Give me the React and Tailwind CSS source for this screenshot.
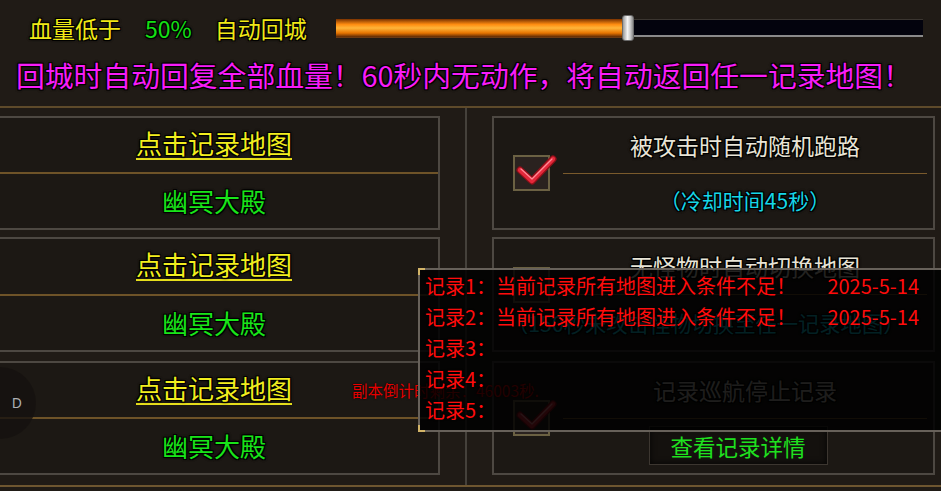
import React from 'react';

const OUTLINE = '[text-shadow:-1px_-1px_0_#000,1px_-1px_0_#000,-1px_1px_0_#000,1px_1px_0_#000,0_0_3px_#000,0_0_3px_#000]';

function CheckBox({ checked }) {
  return (
    <div className="relative h-[36px] w-[37px] border-2 border-[#6b6143] bg-[#2a221f]">
      {checked && (
        <svg className="absolute left-[1px] top-[-2px] overflow-visible" width="42" height="30" viewBox="0 0 42 30">
          <polyline points="4,15 16,26 37,4" fill="none" stroke="#8e0f18" strokeWidth="7" strokeLinecap="round" strokeLinejoin="round" />
          <polyline points="4,15 16,26 37,4" fill="none" stroke="#e3283a" strokeWidth="4.5" strokeLinecap="round" strokeLinejoin="round" />
          <polyline points="5,14 16,24 36,4" fill="none" stroke="#ff8a96" strokeWidth="1.2" strokeLinecap="round" strokeLinejoin="round" />
        </svg>
      )}
    </div>
  );
}

function MapBox({ className = '' }) {
  return (
    <div className={`flex flex-col border-2 border-[#4d4842] bg-[#1c1814] ${className}`}>
      <div className="flex flex-1 items-center justify-center">
        <span className={`border-b-2 border-[#e6de1c] pb-[2px] text-[26px] leading-none text-[#f2ee1e] ${OUTLINE}`}>点击记录地图</span>
      </div>
      <div className="h-[2px] bg-[#6e5328]" />
      <div className="flex flex-1 items-center justify-center">
        <span className={`text-[26px] leading-none text-[#19e419] ${OUTLINE}`}>幽冥大殿</span>
      </div>
    </div>
  );
}

const records = [
  { label: '记录1：', msg: '当前记录所有地图进入条件不足！', date: '2025-5-14' },
  { label: '记录2：', msg: '当前记录所有地图进入条件不足！', date: '2025-5-14' },
  { label: '记录3：', msg: '', date: '' },
  { label: '记录4：', msg: '', date: '' },
  { label: '记录5：', msg: '', date: '' },
];

export default function App() {
  return (
    <div className="relative h-[491px] w-[941px] overflow-hidden bg-[#201b16] font-['Noto_Sans_CJK_SC','Noto_Sans',sans-serif]">
      {/* 顶部 血量设置 */}
      <div className="flex h-[56px] items-center whitespace-nowrap text-[23px] leading-none">
        <span className={`ml-[29px] text-[#f0e816] ${OUTLINE}`}>血量低于</span>
        <span className={`ml-[24px] text-[#14e014] ${OUTLINE}`}>50%</span>
        <span className={`ml-[23px] text-[#f0e816] ${OUTLINE}`}>自动回城</span>
        <div className="ml-[29px] flex w-[587px] items-center">
          <div className="h-[19px] w-[286px] border-b border-[#6a3a14] bg-[linear-gradient(to_bottom,#7a3200,#ff8c10_30%,#ffb53a_50%,#e67400_78%,#5a2806)]" />
          <div className="h-[26px] w-[12px] rounded-[3px] border border-[#6a6a6a] bg-[linear-gradient(to_right,#9a9a9a,#f4f4f4_45%,#d0d0d0_70%,#8a8a8a)]" />
          <div className="h-[18px] flex-1 border-t border-b-2 border-t-[#3a3530] border-b-[#8a8a8a] bg-[#03030d]" />
        </div>
      </div>

      <div className={`flex h-[38px] items-center whitespace-nowrap pl-[16px] text-[28.8px] leading-none text-[#f81cf8] ${OUTLINE}`}>
        回城时自动回复全部血量！60秒内无动作，将自动返回任一记录地图！
      </div>

      {/* 主体 */}
      <div className="mt-[12px] flex h-[381px] border-t-2 border-b-2 border-t-[#5e4a2a] border-b-[#6e5630]">
        <div className="-ml-[12px] flex w-[452px] flex-col py-[8px]">
          <MapBox className="h-[114px]" />
          <MapBox className="mt-[7px] h-[115px]" />
          <MapBox className="mt-[9px] h-[114px]" />
        </div>

        <div className="flex w-[52px] justify-center">
          <div className="w-[2px] bg-[#45413b]" />
        </div>

        <div className="flex w-[443px] flex-col py-[8px]">
          <div className="flex h-[114px] items-center border-2 border-[#4d4842] bg-[#1c1814]">
            <div className="w-[69px] pl-[19px]">
              <CheckBox checked />
            </div>
            <div className="flex h-full flex-1 flex-col pr-[6px]">
              <div className="flex flex-1 items-center justify-center">
                <span className={`text-[23px] leading-none text-[#e8e4d6] ${OUTLINE}`}>被攻击时自动随机跑路</span>
              </div>
              <div className="h-px bg-[#7a5a2c]" />
              <div className="flex flex-1 items-center justify-center">
                <span className={`text-[21px] leading-none text-[#16d6e8] ${OUTLINE}`}>（冷却时间45秒）</span>
              </div>
            </div>
          </div>

          <div className="mt-[7px] flex h-[115px] items-center border-2 border-[#4d4842] bg-[#1c1814]">
            <div className="mb-[20px] w-[69px] pl-[19px]">
              <CheckBox />
            </div>
            <div className="flex h-full flex-1 flex-col pr-[6px]">
              <div className="flex flex-1 items-center justify-center">
                <span className={`text-[23px] leading-none text-[#e8e4d6] ${OUTLINE}`}>无怪物时自动切换地图</span>
              </div>
              <div className="h-px bg-[#7a5a2c]" />
              <div className="flex flex-1 items-center">
                <span className={`-ml-[56px] whitespace-nowrap text-[21.3px] leading-none text-[#16d6e8] ${OUTLINE}`}>（150秒未攻击怪物切换至任一记录地图）</span>
              </div>
            </div>
          </div>

          <div className="mt-[9px] flex h-[114px] items-center border-2 border-[#4d4842] bg-[#1c1814]">
            <div className="w-[69px] pl-[19px]">
              <CheckBox checked />
            </div>
            <div className="flex h-full flex-1 flex-col pr-[6px]">
              <div className="flex flex-1 items-center justify-center">
                <span className={`text-[23px] leading-none text-[#c8c4bc] ${OUTLINE}`}>记录巡航停止记录</span>
              </div>
              <div className="h-px bg-[#7a5a2c]" />
              <div className="flex flex-1 items-center justify-center pr-[14px]">
                <button className="flex h-[39px] w-[179px] items-center justify-center border border-[#3c3630] bg-[#14110e] text-[22.5px] leading-none text-[#1fe01f] shadow-[inset_0_0_6px_rgba(0,0,0,0.8)]">
                  查看记录详情
                </button>
              </div>
            </div>
          </div>
        </div>
      </div>

      {/* 左侧圆形按钮 */}
      <div className="absolute left-[-36px] top-[367px] flex h-[72px] w-[72px] items-center justify-end rounded-full bg-[#15120f]/80 pr-[14px]">
        <span className="font-['Noto_Sans',sans-serif] text-[14px] leading-none text-[#aeb0b4]">D</span>
      </div>

      {/* 副本倒计时 */}
      <div className="absolute left-[352px] top-[380px] whitespace-nowrap text-[15.5px] leading-[20px] text-[#e60000] [text-shadow:0_0_2px_#000]">
        副本倒计时剩余：46003秒.
      </div>

      {/* 记录弹窗 */}
      <div className="absolute left-[418px] top-[268px] h-[164px] w-[540px] border-2 border-[#67615a] bg-black/[0.85]">
        <div className="absolute left-[-2px] top-[-2px] h-[7px] w-[7px] border-l-2 border-t-2 border-[#d2b468]" />
        <div className="absolute bottom-[-2px] left-[-2px] h-[7px] w-[7px] border-b-2 border-l-2 border-[#d2b468]" />
        <div className="flex flex-col pl-[5px] text-[20px] text-[#ff0c0c]">
          {records.map((r) => (
            <div key={r.label} className="flex h-[31px] w-[494px] items-center whitespace-nowrap leading-none [text-shadow:0_0_2px_#000]">
              <span>{r.label}</span>
              <span>{r.msg}</span>
              <span className="ml-auto">{r.date}</span>
            </div>
          ))}
        </div>
      </div>
    </div>
  );
}
